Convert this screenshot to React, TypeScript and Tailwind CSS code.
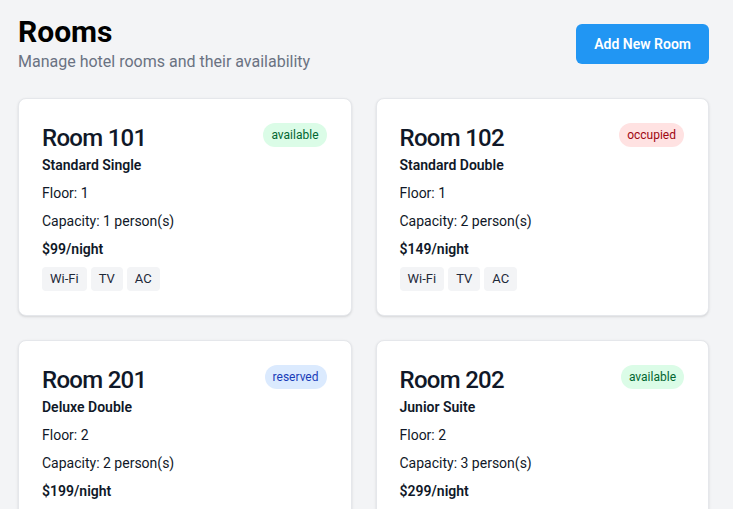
import React from 'react';

type Status = 'available' | 'occupied' | 'reserved';

interface Room {
  id: number;
  number: string;
  type: string;
  floor: number;
  capacity: number;
  price: number;
  status: Status;
  amenities: string[];
}

const rooms: Room[] = [
  { id: 1, number: '101', type: 'Standard Single', floor: 1, capacity: 1, price: 99, status: 'available', amenities: ['Wi-Fi', 'TV', 'AC'] },
  { id: 2, number: '102', type: 'Standard Double', floor: 1, capacity: 2, price: 149, status: 'occupied', amenities: ['Wi-Fi', 'TV', 'AC'] },
  { id: 3, number: '201', type: 'Deluxe Double', floor: 2, capacity: 2, price: 199, status: 'reserved', amenities: ['Wi-Fi', 'TV', 'AC', 'Mini Bar'] },
  { id: 4, number: '202', type: 'Junior Suite', floor: 2, capacity: 3, price: 299, status: 'available', amenities: ['Wi-Fi', 'TV', 'AC', 'Mini Bar', 'Jacuzzi'] },
];

const statusClass: Record<Status, string> = {
  available: 'bg-green-100 text-green-800',
  occupied: 'bg-red-100 text-red-800',
  reserved: 'bg-blue-100 text-blue-800',
};

const RoomCard: React.FC<{ room: Room }> = ({ room }) => (
  <div className="bg-white rounded-lg border border-gray-200 shadow-sm pl-[23px] pr-6 py-6">
    <div className="flex items-start justify-between">
      <h3 className="text-2xl leading-8 tracking-[-0.03em] -mt-px mb-px text-gray-900 font-medium">Room {room.number}</h3>
      <span className={`px-2 py-1 rounded-full text-xs leading-4 ${statusClass[room.status]}`}>{room.status}</span>
    </div>
    <p className="text-sm font-semibold text-gray-900">{room.type}</p>
    <p className="mt-2 text-sm text-gray-900">Floor: {room.floor}</p>
    <p className="mt-2 text-sm text-gray-900">Capacity: {room.capacity} person(s)</p>
    <p className="mt-2 text-sm font-semibold text-gray-900">${room.price}/night</p>
    <div className="mt-2 flex flex-wrap gap-1">
      {room.amenities.map((a) => (
        <span key={a} className="bg-gray-100 text-gray-800 text-[13px] leading-4 px-2 py-1 rounded">{a}</span>
      ))}
    </div>
  </div>
);

export default function App() {
  return (
    <div className="min-h-screen bg-gray-100 pl-[18px] pr-6 pt-[14px] pb-6" style={{ fontFamily: 'Roboto, sans-serif' }}>
      <div className="flex items-center justify-between mb-6">
        <div>
          <h1 className="text-3xl font-bold text-black">Rooms</h1>
          <p className="text-gray-500">Manage hotel rooms and their availability</p>
        </div>
        <button className="bg-[#2196f3] text-white text-sm font-semibold h-10 px-[18px] rounded-md">Add New Room</button>
      </div>
      <div className="grid grid-cols-2 gap-6">
        {rooms.map((r) => (
          <RoomCard key={r.id} room={r} />
        ))}
      </div>
    </div>
  );
}
